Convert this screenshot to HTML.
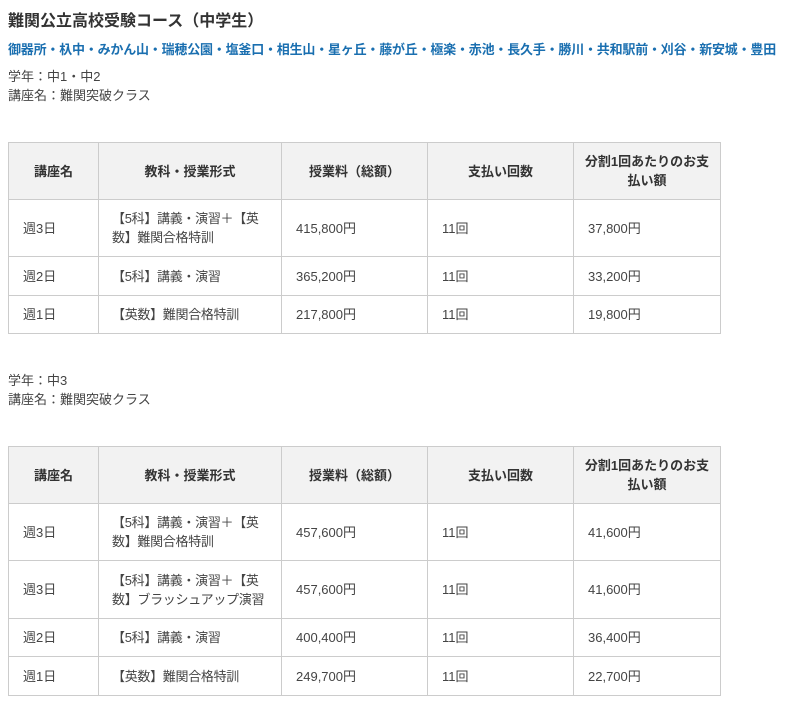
<!DOCTYPE html>
<html><head><meta charset="utf-8"><style>
body{margin:0;background:#fff;color:#444;font-family:"Liberation Sans","Noto Sans CJK JP",sans-serif;font-size:13px;}
.t{position:absolute;left:8px;top:7px;font-size:16px;font-weight:bold;color:#333;margin:0}
.l{position:absolute;left:8px;top:39px;font-size:13px;font-weight:bold;color:#1a6fb0;white-space:nowrap;letter-spacing:-0.2px}
.p{position:absolute;left:8px;line-height:19px}
table{position:absolute;left:8px;border-collapse:collapse;width:712px;table-layout:fixed}
td,th{border:1px solid #ccc;padding:0 14px;line-height:19px}
td:nth-child(2){padding:0 6px 0 13px;letter-spacing:-0.3px}
th{background:#f2f2f2;font-weight:bold;color:#333;text-align:center;height:56px;padding:0 8px}
</style></head><body>
<div class="t">難関公立高校受験コース（中学生）</div>
<div class="l">御器所・杁中・みかん山・瑞穂公園・塩釜口・相生山・星ヶ丘・藤が丘・極楽・赤池・長久手・勝川・共和駅前・刈谷・新安城・豊田</div>
<div class="p" style="top:67px">学年：中1・中2<br>講座名：難関突破クラス</div>
<table style="top:142px">
<colgroup><col style="width:90px"><col style="width:183px"><col style="width:146px"><col style="width:146px"><col style="width:147px"></colgroup>
<tr><th>講座名</th><th>教科・授業形式</th><th>授業料（総額）</th><th>支払い回数</th><th>分割1回あたりのお支払い額</th></tr>
<tr style="height:57px"><td>週3日</td><td>【5科】講義・演習＋【英数】難関合格特訓</td><td>415,800円</td><td>11回</td><td>37,800円</td></tr>
<tr style="height:39px"><td>週2日</td><td>【5科】講義・演習</td><td>365,200円</td><td>11回</td><td>33,200円</td></tr>
<tr style="height:38px"><td>週1日</td><td>【英数】難関合格特訓</td><td>217,800円</td><td>11回</td><td>19,800円</td></tr>
</table>
<div class="p" style="top:371px">学年：中3<br>講座名：難関突破クラス</div>
<table style="top:446px">
<colgroup><col style="width:90px"><col style="width:183px"><col style="width:146px"><col style="width:146px"><col style="width:147px"></colgroup>
<tr><th>講座名</th><th>教科・授業形式</th><th>授業料（総額）</th><th>支払い回数</th><th>分割1回あたりのお支払い額</th></tr>
<tr style="height:57px"><td>週3日</td><td>【5科】講義・演習＋【英数】難関合格特訓</td><td>457,600円</td><td>11回</td><td>41,600円</td></tr>
<tr style="height:58px"><td>週3日</td><td>【5科】講義・演習＋【英数】ブラッシュアップ演習</td><td>457,600円</td><td>11回</td><td>41,600円</td></tr>
<tr style="height:38px"><td>週2日</td><td>【5科】講義・演習</td><td>400,400円</td><td>11回</td><td>36,400円</td></tr>
<tr style="height:39px"><td>週1日</td><td>【英数】難関合格特訓</td><td>249,700円</td><td>11回</td><td>22,700円</td></tr>
</table>
</body></html>
